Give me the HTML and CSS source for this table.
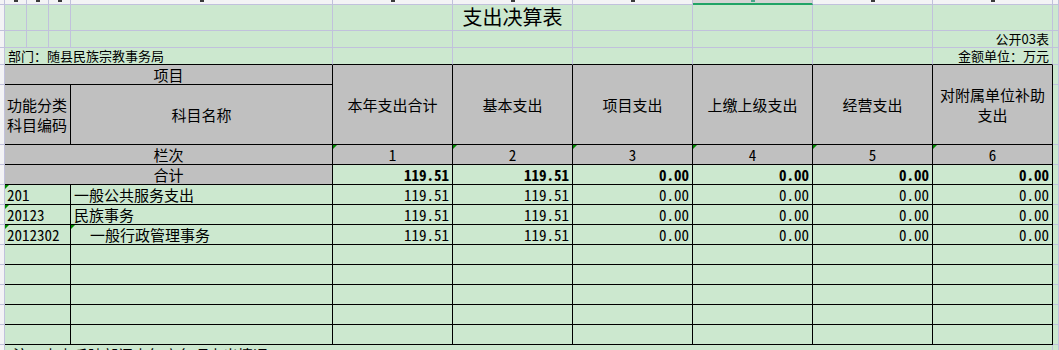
FILE: index.html
```html
<!DOCTYPE html>
<html lang="zh-CN">
<head>
<meta charset="utf-8">
<title>支出决算表</title>
<link rel="stylesheet" href="styles.css">
</head>
<body>
<table class="sheet">
  <colgroup>
    <col class="w-rh">
    <col class="w-s"><col class="w-s"><col class="w-s">
    <col class="w-d">
    <col class="w-n"><col class="w-n"><col class="w-n"><col class="w-n"><col class="w-n"><col class="w-n">
    <col class="w-k">
    <col class="w-l">
  </colgroup>
  <tr class="colhdr">
    <td class="rh"></td>
    <td><i class="mark"></i></td><td><i class="mark"></i></td><td><i class="mark"></i></td><td><i class="mark"></i></td>
    <td><i class="mark"></i></td><td><i class="mark"></i></td><td><i class="mark"></i></td><td class="sel"><i class="mark"></i></td>
    <td><i class="mark"></i></td><td><i class="mark"></i></td><td></td><td></td>
  </tr>
  <tr class="r-title">
    <td class="rh"></td>
    <td></td><td></td><td></td><td></td><td></td>
    <td class="title">支出决算表</td>
    <td></td><td></td><td></td><td></td><td></td><td></td>
  </tr>
  <tr class="r-small">
    <td class="rh"></td>
    <td></td><td></td><td></td><td></td><td></td><td></td><td></td><td></td><td></td>
    <td class="note right">公开03表</td>
    <td></td><td></td>
  </tr>
  <tr class="r-small">
    <td class="rh"></td>
    <td colspan="4" class="note left edge">部门：随县民族宗教事务局</td>
    <td class="edge"></td><td class="edge"></td><td class="edge"></td><td class="edge"></td><td class="edge"></td>
    <td class="note right edge">金额单位：万元</td>
    <td></td><td></td>
  </tr>
  <tr class="r-row">
    <td class="rh"></td>
    <td colspan="4" class="b hd center">项目</td>
    <td rowspan="2" class="b hd center wrap">本年支出合计</td>
    <td rowspan="2" class="b hd center wrap">基本支出</td>
    <td rowspan="2" class="b hd center wrap">项目支出</td>
    <td rowspan="2" class="b hd center wrap">上缴上级支出</td>
    <td rowspan="2" class="b hd center wrap">经营支出</td>
    <td rowspan="2" class="b hd center wrap">对附属单位补助支出</td>
    <td></td><td></td>
  </tr>
  <tr class="r-head">
    <td class="rh"></td>
    <td colspan="3" class="b hd left wrap code">功能分类科目编码</td>
    <td class="b hd center">科目名称</td>
    <td></td><td></td>
  </tr>
  <tr class="r-row">
    <td class="rh"></td>
    <td colspan="4" class="b hd center">栏次</td>
    <td class="b hd center tri num">1</td>
    <td class="b hd center tri num">2</td>
    <td class="b hd center tri num">3</td>
    <td class="b hd center tri num">4</td>
    <td class="b hd center tri num">5</td>
    <td class="b hd center tri num">6</td>
    <td></td><td></td>
  </tr>
  <tr class="r-row">
    <td class="rh"></td>
    <td colspan="4" class="b hd center">合计</td>
    <td class="b right num bold">119.51</td>
    <td class="b right num bold">119.51</td>
    <td class="b right num bold">0.00</td>
    <td class="b right num bold">0.00</td>
    <td class="b right num bold">0.00</td>
    <td class="b right num bold">0.00</td>
    <td></td><td></td>
  </tr>
  <tr class="r-row">
    <td class="rh"></td>
    <td colspan="3" class="b left tri num code">201</td>
    <td class="b left name">一般公共服务支出</td>
    <td class="b right num">119.51</td>
    <td class="b right num">119.51</td>
    <td class="b right num">0.00</td>
    <td class="b right num">0.00</td>
    <td class="b right num">0.00</td>
    <td class="b right num">0.00</td>
    <td></td><td></td>
  </tr>
  <tr class="r-row">
    <td class="rh"></td>
    <td colspan="3" class="b left tri num code">20123</td>
    <td class="b left name">民族事务</td>
    <td class="b right num">119.51</td>
    <td class="b right num">119.51</td>
    <td class="b right num">0.00</td>
    <td class="b right num">0.00</td>
    <td class="b right num">0.00</td>
    <td class="b right num">0.00</td>
    <td></td><td></td>
  </tr>
  <tr class="r-row">
    <td class="rh"></td>
    <td colspan="3" class="b left tri num code">2012302</td>
    <td class="b left name indent tri">一般行政管理事务</td>
    <td class="b right num">119.51</td>
    <td class="b right num">119.51</td>
    <td class="b right num">0.00</td>
    <td class="b right num">0.00</td>
    <td class="b right num">0.00</td>
    <td class="b right num">0.00</td>
    <td></td><td></td>
  </tr>
  <tr class="r-row">
    <td class="rh"></td>
    <td colspan="3" class="b"></td><td class="b"></td>
    <td class="b"></td><td class="b"></td><td class="b"></td><td class="b"></td><td class="b"></td><td class="b"></td>
    <td></td><td></td>
  </tr>
  <tr class="r-row">
    <td class="rh"></td>
    <td colspan="3" class="b"></td><td class="b"></td>
    <td class="b"></td><td class="b"></td><td class="b"></td><td class="b"></td><td class="b"></td><td class="b"></td>
    <td></td><td></td>
  </tr>
  <tr class="r-row">
    <td class="rh"></td>
    <td colspan="3" class="b"></td><td class="b"></td>
    <td class="b"></td><td class="b"></td><td class="b"></td><td class="b"></td><td class="b"></td><td class="b"></td>
    <td></td><td></td>
  </tr>
  <tr class="r-row">
    <td class="rh"></td>
    <td colspan="3" class="b"></td><td class="b"></td>
    <td class="b"></td><td class="b"></td><td class="b"></td><td class="b"></td><td class="b"></td><td class="b"></td>
    <td></td><td></td>
  </tr>
  <tr class="r-row">
    <td class="rh"></td>
    <td colspan="3" class="b"></td><td class="b"></td>
    <td class="b"></td><td class="b"></td><td class="b"></td><td class="b"></td><td class="b"></td><td class="b"></td>
    <td></td><td></td>
  </tr>
  <tr class="r-row">
    <td class="rh"></td>
    <td colspan="10" class="left foot">注：本表反映部门本年度各项支出情况。</td>
    <td></td><td></td>
  </tr>
</table>
</body>
</html>
```

FILE: styles.css
```css
html, body {
  margin: 0;
  padding: 0;
  overflow: hidden;
  background: #cce8cf;
}

body {
  font-family: "Noto Sans CJK SC", "Noto Sans", sans-serif;
  color: #000;
}

.sheet {
  border-collapse: separate;
  border-spacing: 0;
  table-layout: fixed;
  width: 1089px;
}

.w-rh { width: 5px; }
.w-s { width: 22px; }
.w-d { width: 262px; }
.w-n { width: 120px; }
.w-k { width: 6px; }
.w-l { width: 30px; }

.sheet td {
  box-sizing: border-box;
  padding: 0;
  border-right: 1px solid #c1c1dc;
  border-bottom: 1px solid #c1c1dc;
  font-size: 15px;
  line-height: 18px;
  vertical-align: middle;
  white-space: nowrap;
  position: relative;
}

/* spreadsheet column header strip (letters scrolled out of view) */
.colhdr td {
  height: 5px;
  background: #f3f3f5;
  vertical-align: top;
  line-height: 0;
}
.mark {
  display: block;
  width: 4px;
  height: 2px;
  margin: 0 auto;
  background: #3a3a3a;
}
.colhdr td.sel {
  background: #d4d4d4;
  border-bottom: 2px solid #21a366;
}
.colhdr td.sel .mark { background: #4aa58a; }

/* spreadsheet row header strip */
.sheet td.rh {
  background: #f3f3f5;
}

.r-title td { height: 26px; }
.r-small td { height: 17px; }
.r-row td { height: 20px; }
.r-head td { height: 60px; }

.title {
  font-size: 20px !important;
  line-height: 24px !important;
  text-align: center;
  vertical-align: bottom !important;
  padding-bottom: 1px !important;
}

.note {
  font-size: 13px !important;
  line-height: 16px !important;
}

.sheet td.edge { border-bottom-color: #000; }

.sheet td.b {
  border-right-color: #000;
  border-bottom-color: #000;
}

.hd { background: #c0c0c0; }

.center { text-align: center; }
.left { text-align: left; padding-left: 3px !important; }
.right { text-align: right; padding-right: 3px !important; }

.wrap {
  white-space: normal !important;
  line-height: 20px !important;
}

.sheet td.code { padding-left: 2px !important; }
.sheet td.indent { padding-left: 19px !important; }

.num {
  font-feature-settings: "hwid" 1;
}
.bold { font-weight: 700; }

.tri::before {
  content: "";
  position: absolute;
  top: 0;
  left: 0;
  width: 0;
  height: 0;
  border-top: 4px solid #008a00;
  border-right: 4px solid transparent;
}

.foot {
  vertical-align: top !important;
  padding-top: 1px !important;
  padding-left: 8px !important;
}
```
